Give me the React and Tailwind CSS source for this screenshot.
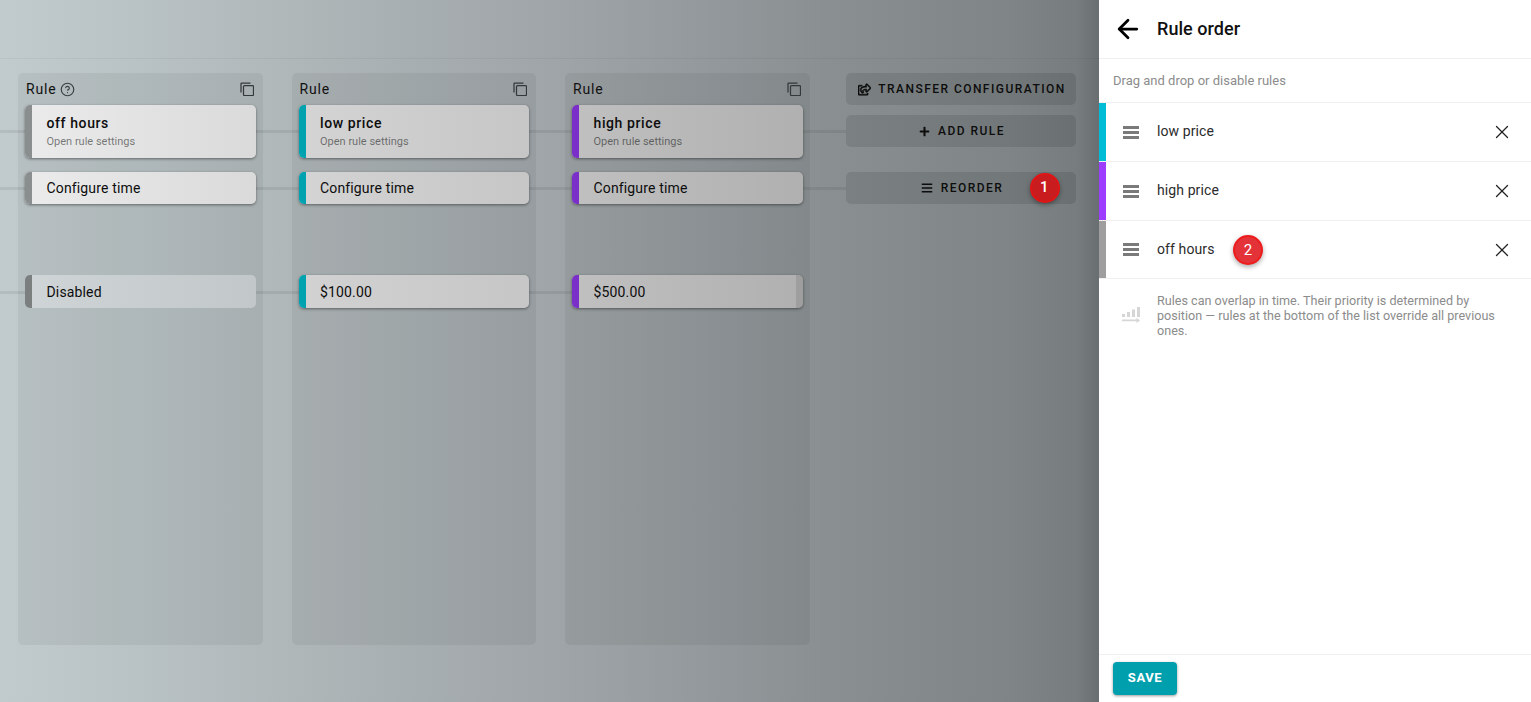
import { ArrowLeft, CircleHelp, X } from 'lucide-react';
import { FaBars, FaPlus, FaRegShareSquare } from 'react-icons/fa';

function MenuBars({ className }) {
  return (
    <svg viewBox="0 0 16 13" className={className} fill="currentColor">
      <rect x="0" y="0" width="16" height="3" />
      <rect x="0" y="5" width="16" height="3" />
      <rect x="0" y="10" width="16" height="3" />
    </svg>
  );
}

function CopyIcon() {
  return (
    <svg viewBox="0 0 14 14" className="h-[14px] w-[14px] text-[#33383a]" fill="none" stroke="currentColor" strokeWidth="1.25">
      <rect x="3.5" y="3.5" width="10" height="10" rx="1" />
      <path d="M1 10.5V1.8C1 1.2 1.2 1 1.8 1h8.7" />
    </svg>
  );
}

function Card({ accent, tint, lastStrip, className, children }) {
  return (
    <div className={`relative flex overflow-hidden rounded-[5px] ${tint} ${className}`}>
      <div className={`w-[7px] shrink-0 ${accent}`} />
      <div className="flex min-w-0 flex-1 flex-col justify-center pl-[14.5px]">{children}</div>
      {lastStrip && <div className="w-[7px] shrink-0 bg-black/10" />}
    </div>
  );
}

function RuleColumn({ rule }) {
  return (
    <div className="flex h-[572px] w-[244.5px] shrink-0 flex-col rounded-[5px] bg-black/[0.05] px-[7px] pt-[6px]">
      <div className="flex h-[26px] items-center justify-between pb-[6px] pr-[2px]">
        <div className="flex items-center pl-[1px] text-sm leading-none tracking-[0.8px] text-[#111]">
          Rule
          {rule.help && <CircleHelp className="ml-[4px] h-[15px] w-[15px] text-[#3b4042]" strokeWidth={1.9} />}
        </div>
        <div className="mb-[1px]">
          <CopyIcon />
        </div>
      </div>
      <Card accent={rule.accent} tint={rule.tint} className="h-[53px] shadow-[0_1px_3px_rgba(0,0,0,0.45)]">
        <div className="-mt-[1px] text-sm font-medium leading-[20px] tracking-[0.6px] text-[#0d0d0d]">{rule.name}</div>
        <div className="mt-[2px] text-[11px] leading-[14px] text-black/50">Open rule settings</div>
      </Card>
      <Card accent={rule.accent} tint={rule.tint} className="mt-[14px] h-[32px] shadow-[0_1px_3px_rgba(0,0,0,0.45)]">
        <div className="text-sm leading-none tracking-[0.15px] text-[#0d0d0d]">Configure time</div>
      </Card>
      <Card
        accent={rule.accent2 || rule.accent}
        tint={rule.tint2}
        lastStrip={rule.strip}
        className={`mt-[71px] h-[33px] ${rule.flat ? '' : 'shadow-[0_1px_3px_rgba(0,0,0,0.45)]'}`}
      >
        <div className="text-sm leading-none tracking-[0.15px] text-[#0d0d0d]">{rule.value}</div>
      </Card>
    </div>
  );
}

function ActionButton({ icon, label, className, children }) {
  return (
    <div className={`relative flex items-center justify-center rounded-[5px] bg-black/[0.1] pl-[2px] text-xs font-medium tracking-[1.45px] text-[#0d0d0d] ${className}`}>
      {icon}
      {label}
      {children}
    </div>
  );
}

function Badge({ number, className }) {
  return (
    <div className={`absolute flex h-[30px] w-[30px] items-center justify-center rounded-full border-2 text-[15px] text-white shadow-[0_2px_5px_rgba(0,0,0,0.35)] ${className}`}>
      {number}
    </div>
  );
}

function OrderRow({ name, accent, height, children }) {
  return (
    <div className={`relative flex items-center border-b border-[#f0f0f0] ${height}`}>
      <div className={`h-full w-[7px] shrink-0 ${accent}`} />
      <div className="ml-[17px] flex w-[16px] shrink-0 text-[#7a7a7a]">
        <MenuBars className="h-[13px] w-[16px]" />
      </div>
      <div className="ml-[18px] pb-[2px] text-sm tracking-[0.1px] text-[#2b2b2b]">{name}</div>
      {children}
      <X className="absolute right-[18px] top-1/2 h-[22px] w-[22px] -translate-y-1/2 text-[#222]" strokeWidth={1.4} />
    </div>
  );
}

function PriorityIcon() {
  return (
    <svg viewBox="0 0 18 18" className="h-[18px] w-[18px] text-[#d6d6d6]" fill="currentColor">
      <rect x="0" y="7" width="3" height="3" />
      <rect x="5" y="5" width="3" height="5" />
      <rect x="10" y="2.5" width="3" height="7.5" />
      <rect x="15" y="0" width="3" height="10" />
      <path d="M0 12.5h14.5v-1.7l3.5 2.6-3.5 2.6v-1.7H0z" />
    </svg>
  );
}

const rules = [
  {
    name: 'off hours',
    value: 'Disabled',
    accent: 'bg-[#8a8e8e]',
    accent2: 'bg-[#7b7f80]',
    tint: 'bg-linear-to-r from-[#ebebeb] to-[#dadada]',
    tint2: 'bg-linear-to-r from-[#cfd4d6] to-[#c2c8ca]',
    flat: true,
    help: true,
  },
  {
    name: 'low price',
    value: '$100.00',
    accent: 'bg-[#00a2b0]',
    tint: 'bg-linear-to-r from-[#d4d4d4] to-[#c6c6c6]',
    tint2: 'bg-linear-to-r from-[#d2d2d2] to-[#c6c6c6]',
  },
  {
    name: 'high price',
    value: '$500.00',
    accent: 'bg-[#7a2fc9]',
    tint: 'bg-linear-to-r from-[#c0c0c0] to-[#b0b0b0]',
    tint2: 'bg-linear-to-r from-[#c0c0c0] to-[#b0b0b0]',
    strip: true,
  },
];

export default function App() {
  return (
    <div className="flex h-[702px] w-[1531px] overflow-hidden bg-white font-['Roboto',sans-serif]">
      <div className="relative w-[1099px] shrink-0 bg-[linear-gradient(90deg,#c1cbcd_0%,#b0b8ba_25%,#9fa5a8_50%,#8a9092_75%,#7f8587_92%,#777d7f_98%,#696f71_100%)]">
        {/* connector lines run behind the columns */}
        <div className="absolute left-0 top-[130px] h-[3px] w-[846px] bg-black/[0.07]" />
        <div className="absolute left-0 top-[187px] h-[3px] w-[846px] bg-black/[0.07]" />
        <div className="absolute left-0 top-[291px] h-[3px] w-[580px] bg-black/[0.07]" />

        <div className="h-[59px] border-b border-black/[0.04]" />
        <div className="relative flex items-start pl-[18px] pt-[14px]">
          <div className="flex gap-[29px]">
            {rules.map((rule) => (
              <RuleColumn key={rule.name} rule={rule} />
            ))}
          </div>
          <div className="ml-[36.5px] flex w-[230px] flex-col">
            <ActionButton
              className="h-[32px] gap-[7px]"
              label="TRANSFER CONFIGURATION"
              icon={<FaRegShareSquare className="h-[13px] w-[13px]" stroke="currentColor" strokeWidth={24} />}
            />
            <ActionButton
              className="mt-[10px] h-[32px] gap-[8px]"
              label="ADD RULE"
              icon={<FaPlus className="h-[11px] w-[11px]" />}
            />
            <ActionButton
              className="mt-[25px] h-[32px] gap-[8px]"
              label="REORDER"
              icon={<FaBars className="h-[12px] w-[12px]" />}
            >
              <Badge number="1" className="right-[16px] top-[1px] border-[#e01515] bg-[#c91c1f]" />
            </ActionButton>
          </div>
        </div>
      </div>

      <div className="flex h-full w-[432px] shrink-0 flex-col bg-white">
        <div className="flex h-[59px] items-center border-b border-[#f0f0f0] pl-[14px]">
          <ArrowLeft className="h-[30px] w-[30px] text-black" strokeWidth={2.2} />
          <div className="ml-[14px] text-lg font-medium leading-none tracking-[0.05px] text-[#111]">Rule order</div>
        </div>
        <div className="flex h-[44px] items-center border-b border-[#f0f0f0] pl-[14px] text-[13px] text-[#8c8c8c]">
          Drag and drop or disable rules
        </div>
        <OrderRow name="low price" accent="bg-[#00bcd4]" height="h-[59px]" />
        <OrderRow name="high price" accent="bg-[#9c3dff]" height="h-[59px]" />
        <OrderRow name="off hours" accent="bg-[#9e9e9e]" height="h-[58px]">
          <Badge number="2" className="left-[134px] top-[14px] border-[#ee1c1c] bg-[#e33238]" />
        </OrderRow>
        <div className="flex flex-1 items-start pt-[14px]">
          <div className="ml-[23px] mt-[14px] shrink-0">
            <PriorityIcon />
          </div>
          <p className="ml-[17px] w-[355px] text-[12.6px] leading-[15px] text-[#8c8c8c]">
            Rules can overlap in time. Their priority is determined by position — rules at the bottom of the list override all previous ones.
          </p>
        </div>
        <div className="flex h-[48px] items-start border-t border-[#f0f0f0] pl-[14px] pt-[7px]">
          <div className="flex h-[33px] w-[64px] items-center justify-center rounded-[4px] bg-[#009fad] pb-[2px] text-[13px] font-bold tracking-[0.6px] text-white shadow-[0_1px_3px_rgba(0,0,0,0.4)]">
            SAVE
          </div>
        </div>
      </div>
    </div>
  );
}
